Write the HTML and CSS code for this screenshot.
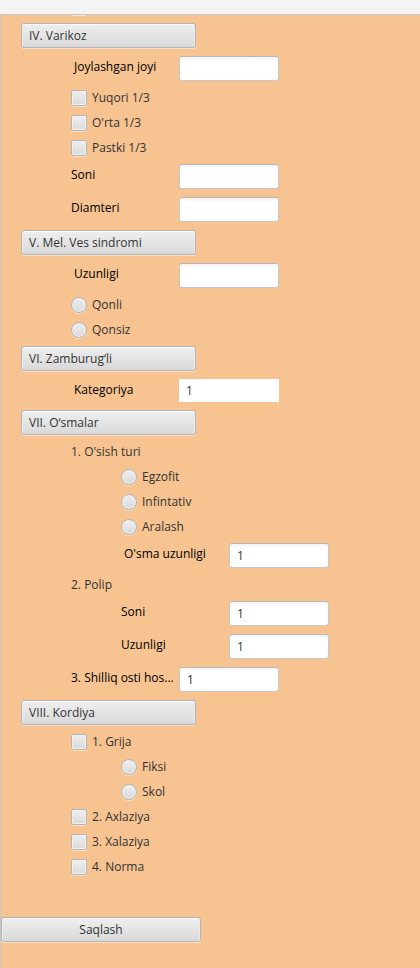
FILE: index.html
```html
<!DOCTYPE html>
<html lang="uz">
<head>
<meta charset="utf-8">
<meta name="viewport" content="width=device-width, initial-scale=1">
<title>Varikoz</title>
<link rel="stylesheet" href="styles.css">
</head>
<body>
<form class="panel">
  <div class="clipped-row"></div>
  <div class="sections">
    <button type="button" class="btn section">IV. Varikoz</button>
    <div class="field"><label class="inset" for="joy">Joylashgan joyi</label><input class="text" id="joy" type="text"></div>
    <label class="option"><input type="checkbox">Yuqori 1/3</label>
    <label class="option"><input type="checkbox">O'rta 1/3</label>
    <label class="option"><input type="checkbox">Pastki 1/3</label>
    <div class="field"><label for="soni">Soni</label><input class="text" id="soni" type="text"></div>
    <div class="field"><label for="diam">Diamteri</label><input class="text" id="diam" type="text"></div>

    <button type="button" class="btn section">V. Mel. Ves sindromi</button>
    <div class="field"><label class="inset" for="uzun">Uzunligi</label><input class="text" id="uzun" type="text"></div>
    <label class="option"><input type="radio" name="qon">Qonli</label>
    <label class="option"><input type="radio" name="qon">Qonsiz</label>

    <button type="button" class="btn section">VI. Zamburug‘li</button>
    <div class="field"><label class="inset" for="kat">Kategoriya</label><input class="text plain" id="kat" type="text" value="1"></div>

    <button type="button" class="btn section">VII. O‘smalar</button>
    <div class="caption">1. O'sish turi</div>
    <div class="nested">
      <label class="option"><input type="radio" name="osish">Egzofit</label>
      <label class="option"><input type="radio" name="osish">Infintativ</label>
      <label class="option"><input type="radio" name="osish">Aralash</label>
      <div class="field"><label class="inset" for="osma">O'sma uzunligi</label><input class="text" id="osma" type="text" value="1"></div>
    </div>
    <div class="caption">2. Polip</div>
    <div class="nested">
      <div class="field"><label for="psoni">Soni</label><input class="text" id="psoni" type="text" value="1"></div>
      <div class="field"><label for="puzun">Uzunligi</label><input class="text" id="puzun" type="text" value="1"></div>
    </div>
    <div class="field"><label for="shilliq">3. Shilliq osti hos...</label><input class="text" id="shilliq" type="text" value="1"></div>

    <button type="button" class="btn section">VIII. Kordiya</button>
    <label class="option"><input type="checkbox">1. Grija</label>
    <div class="nested">
      <label class="option"><input type="radio" name="grija">Fiksi</label>
      <label class="option"><input type="radio" name="grija">Skol</label>
    </div>
    <label class="option"><input type="checkbox">2. Axlaziya</label>
    <label class="option"><input type="checkbox">3. Xalaziya</label>
    <label class="option"><input type="checkbox">4. Norma</label>
  </div>
  <button type="submit" class="btn save">Saqlash</button>
</form>
</body>
</html>
```
FILE: styles.css
```css
* {
  box-sizing: border-box;
}

body {
  margin: 0;
  padding-top: 14px;
  min-height: 100vh;
  display: flex;
  flex-direction: column;
  background: #f4f4f4;
  color: #333;
  font: 12px/17px "Open Sans", "Noto Sans", sans-serif;
}

.panel {
  flex: 1;
  border-top: 1px solid #c8c8c8;
  border-left: 1px solid #c8c8c8;
  background: #f6c391;
}

/* Lower edge of the row scrolled out of view */
.clipped-row {
  width: 14px;
  height: 1px;
  margin-left: 71px;
  background: #fbe3cb;
}

.sections {
  display: flex;
  flex-direction: column;
  gap: 8px;
  padding: 7px 20px 0;
}

.btn {
  height: 25px;
  padding: 0 7px;
  border: 1px solid #b5b5b5;
  border-radius: 3px;
  background: linear-gradient(#efefef, #d9d9d9);
  box-shadow: inset 0 1px #fbfbfb, inset 1px 0 #ececec, inset -1px 0 #ececec, 0 1px #fae0c6;
  color: #333;
  font: inherit;
}

.section {
  width: 175px;
  text-align: left;
}

.field,
.option,
.caption {
  display: flex;
  margin-left: 50px;
}

.field label {
  width: 108px;
  padding-top: 2px;
  color: #000;
  white-space: nowrap;
}

.field .inset {
  padding-left: 3px;
}

.text {
  width: 100px;
  height: 25px;
  padding: 0 7px;
  border: 1px solid #c8c8c8;
  border-top-color: #b8b8b8;
  border-radius: 3px;
  background: linear-gradient(#f2f2f2, #fff 4px);
  color: #333;
  font: inherit;
}

.plain {
  height: 23px;
  padding: 0 6px;
  border-color: #fff;
  border-radius: 0;
  background: #fff;
}

.option {
  align-items: flex-end;
  align-self: flex-start;
  gap: 5px;
  height: 17px;
}

.option input {
  appearance: none;
  width: 16px;
  height: 16px;
  margin: 0;
  border: 1px solid #b5b5b5;
  border-radius: 2px;
  background: linear-gradient(#efefef, #dadada);
  box-shadow: inset 0 0 0 1px #f0f0f0, 0 1px #fae0c6;
}

.option input[type="radio"] {
  border-radius: 50%;
}

.nested {
  display: flex;
  flex-direction: column;
  gap: 8px;
  margin-left: 50px;
}

.save {
  display: block;
  width: 200px;
  margin-top: 42px;
}
```
